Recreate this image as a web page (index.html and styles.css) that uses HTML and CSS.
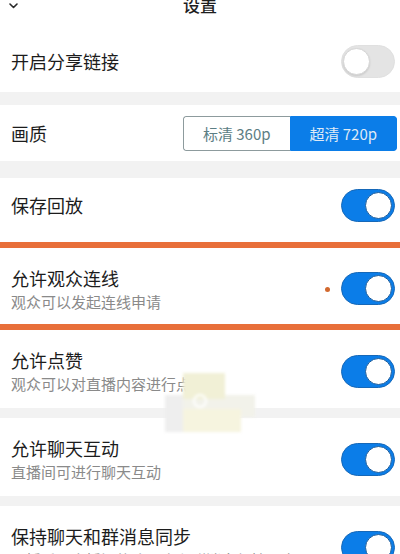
FILE: index.html
```html
<!DOCTYPE html>
<html lang="zh-CN">
<head>
<meta charset="utf-8">
<title>设置</title>
<link rel="stylesheet" href="styles.css">
</head>
<body>
<div class="page">
  <section class="group group-top">
    <header class="nav">
      <span class="back">
        <svg width="9" height="6" viewBox="0 0 9 6"><path d="M1 1 L4.5 4.5 L8 1" fill="none" stroke="#2a2a2a" stroke-width="1.6" stroke-linecap="round" stroke-linejoin="round"/></svg>
      </span>
      <span class="nav-title">设置</span>
      <span></span>
    </header>
    <div class="row row-share">
      <span class="title">开启分享链接</span>
      <span class="switch off"><span class="knob"></span></span>
    </div>
  </section>

  <section class="group group-quality">
    <div class="row row-quality">
      <span class="title">画质</span>
      <div class="seg">
        <span class="seg-item">标清 360p</span>
        <span class="seg-item active">超清 720p</span>
      </div>
    </div>
  </section>

  <section class="group group-live">
    <div class="row row-replay">
      <span class="title">保存回放</span>
      <span class="switch on"><span class="knob"></span></span>
    </div>
    <div class="row double highlight">
      <div class="text">
        <div class="title">允许观众连线</div>
        <div class="sub">观众可以发起连线申请</div>
      </div>
      <div class="right">
        <span class="dot"></span>
        <span class="switch on"><span class="knob"></span></span>
      </div>
    </div>
    <div class="row double">
      <div class="text">
        <div class="title">允许点赞</div>
        <div class="sub">观众可以对直播内容进行点赞</div>
      </div>
      <span class="switch on"><span class="knob"></span></span>
    </div>
  </section>

  <section class="group group-small">
    <div class="row double">
      <div class="text">
        <div class="title">允许聊天互动</div>
        <div class="sub">直播间可进行聊天互动</div>
      </div>
      <span class="switch on"><span class="knob"></span></span>
    </div>
  </section>

  <section class="group group-small">
    <div class="row double">
      <div class="text">
        <div class="title">保持聊天和群消息同步</div>
        <div class="sub">开播后，直播间的聊天会和群消息保持同步</div>
      </div>
      <span class="switch on"><span class="knob"></span></span>
    </div>
  </section>

  <div class="photo-blur">
    <div class="pb pb-mid"></div>
    <div class="pb pb-top"></div>
    <div class="pb pb-left"></div>
    <div class="pb pb-bottom"></div>
    <div class="pb pb-ring"></div>
  </div>
</div>
</body>
</html>
```

FILE: styles.css
```css
html, body {
  margin: 0;
  padding: 0;
}
body {
  background: #f2f2f2;
  font-family: "Noto Sans CJK SC", "Noto Sans", sans-serif;
  color: #1c1c1c;
  overflow: hidden;
  width: 400px;
  height: 554px;
}
.page {
  position: relative;
  margin-top: -8px;
}
.group {
  background: #fff;
}
.group-quality {
  margin-top: 13px;
}
.group-live {
  margin-top: 17px;
}
.group-small {
  margin-top: 10px;
}

/* header */
.nav {
  display: grid;
  grid-template-columns: 1fr auto 1fr;
  height: 38px;
}
.back {
  margin: 10px 0 0 9px;
  line-height: 0;
}
.nav-title {
  font-size: 17px;
  line-height: 26px;
  font-weight: 500;
  color: #1e1e1e;
}

/* rows */
.row {
  display: flex;
  align-items: center;
  justify-content: space-between;
  padding: 0 5px 0 11px;
  background: #fff;
}
.title {
  font-size: 18px;
  line-height: 24px;
  color: #1c1c1c;
}
.sub {
  font-size: 15px;
  line-height: 22px;
  color: #8a8a8a;
}
.row-share {
  height: 62px;
}
.row-quality {
  height: 56px;
  padding-right: 3px;
}
.row-replay {
  height: 54px;
  padding-bottom: 10px;
}
.row.double {
  height: 78px;
  box-sizing: border-box;
  padding-top: 18px;
  padding-bottom: 13px;
}
.row.double .text {
  align-self: flex-start;
}
.row.double .sub {
  margin-top: 1px;
}
.row.double.highlight {
  height: 88px;
  border-top: 6px solid #e86f3a;
  border-bottom: 6px solid #e86f3a;
}
.right {
  display: flex;
  align-items: center;
  gap: 11px;
}
.dot {
  width: 5px;
  height: 5px;
  border-radius: 50%;
  background: #d2692f;
  margin-top: 2px;
}

/* switch */
.switch {
  position: relative;
  display: block;
  width: 54px;
  height: 33px;
  border-radius: 17px;
  box-sizing: border-box;
  flex: none;
}
.switch.on {
  background: #0b7de8;
  border: 1px solid #1668b8;
}
.switch.off {
  background: #e4e4e4;
  border: 1px solid #e0e0e0;
}
.knob {
  position: absolute;
  top: 2px;
  width: 27px;
  height: 27px;
  border-radius: 50%;
  background: #fff;
  box-sizing: border-box;
}
.switch.on .knob {
  right: 2px;
  border: 1px solid #1d5d9c;
}
.switch.off .knob {
  left: 1px;
  border: 1px solid #d6d6d6;
  box-shadow: 0 1px 2px rgba(0,0,0,0.12);
}

/* segmented */
.seg {
  display: flex;
  height: 35px;
  width: 214px;
  border-radius: 3px;
  overflow: hidden;
}
.seg-item {
  flex: 1;
  display: flex;
  align-items: center;
  justify-content: center;
  font-size: 15px;
  color: #5c7e84;
  border: 1px solid #8d9b9d;
  border-right: none;
  border-radius: 3px 0 0 3px;
  box-sizing: border-box;
}
.seg-item.active {
  background: #0b7de8;
  color: #dfeaf6;
  border: 1px solid #0b7de8;
  border-radius: 0 3px 3px 0;
}

/* blurred pasted picture over the list */
.photo-blur {
  position: absolute;
  left: 165px;
  top: 381px;
  width: 90px;
  height: 60px;
  filter: blur(1.5px);
}
.pb {
  position: absolute;
}
.pb-mid {
  left: 0;
  top: 22px;
  width: 90px;
  height: 22px;
  background: #f2f2ea;
}
.pb-top {
  left: 18px;
  top: 0;
  width: 42px;
  height: 26px;
  background: #f1f0d6;
}
.pb-left {
  left: 0;
  top: 22px;
  width: 18px;
  height: 37px;
  background: #eeeeee;
}
.pb-bottom {
  left: 18px;
  top: 36px;
  width: 58px;
  height: 23px;
  background: #f6f4df;
}
.pb-ring {
  left: 28px;
  top: 21px;
  width: 10px;
  height: 10px;
  border-radius: 50%;
  border: 2px solid #ffffff;
}
```
